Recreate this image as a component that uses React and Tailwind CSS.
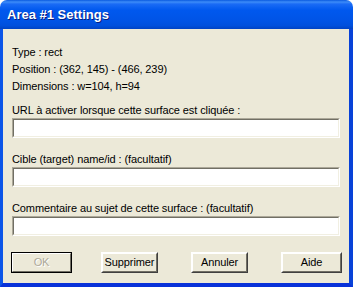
import React from "react";

// XP-style sunken edit box
function EditBox() {
  return (
    <div className="h-[20px] w-full border border-t-[#ACA899] border-l-[#ACA899] border-r-white border-b-white">
      <div className="h-full w-full border border-t-[#716F64] border-l-[#716F64] border-r-[#F1EFE2] border-b-[#F1EFE2] bg-white" />
    </div>
  );
}

function Button({ label, width, isDefault }) {
  if (isDefault) {
    // default + disabled (OK)
    return (
      <div className={`h-[21px] ${width} border border-black`}>
        <div className="h-full w-full border border-t-white border-l-white border-r-[#716F64] border-b-[#716F64]">
          <div className="flex h-full w-full items-center justify-center bg-[#ECE9D8]">
            <span className="text-[#ACA899] [text-shadow:1px_1px_0_#fff]">{label}</span>
          </div>
        </div>
      </div>
    );
  }
  return (
    <div className={`h-[21px] ${width} border border-t-white border-l-white border-r-[#404040] border-b-[#404040]`}>
      <div className="flex h-full w-full items-center justify-center border border-t-white border-l-white border-r-[#716F64] border-b-[#716F64] bg-[#ECE9D8]">
        {label}
      </div>
    </div>
  );
}

function Field({ label }) {
  return (
    <div className="flex flex-col">
      <div className="h-[16px] leading-[16px]">{label}</div>
      <EditBox />
    </div>
  );
}

export default function App() {
  return (
    <div className="flex h-[287px] w-[353px] flex-col bg-white font-['Liberation_Sans',Arial,sans-serif] text-[11px] tracking-[-0.1px] text-black">
      {/* TITLE BAR */}
      <div className="flex h-[29px] items-center rounded-t-[7px] bg-[linear-gradient(to_bottom,#0A5AE0_0%,#3D8CF8_7%,#1A6BF5_14%,#0058EE_35%,#0054E6_70%,#0050DD_88%,#0043C4_100%)] pl-[7px]">
        <span className="text-[13px] font-bold tracking-normal text-white [text-shadow:1px_1px_0_#0A1E80]">
          Area #1 Settings
        </span>
      </div>

      {/* CLIENT */}
      <div className="flex flex-1 flex-col border-b-4 border-l-[3px] border-r-4 border-b-[#0831D9] border-l-[#0B55E8] border-r-[#0842D8] bg-[#ECE9D8] px-[9px] pt-[15px]">
        <div className="leading-[17px]">
          <div>Type : rect</div>
          <div>Position : (362, 145) - (466, 239)</div>
          <div>Dimensions : w=104, h=94</div>
        </div>

        <div className="mt-[7px] flex flex-col gap-[13px]">
          <Field label="URL à activer lorsque cette surface est cliquée :" />
          <Field label="Cible (target) name/id : (facultatif)" />
          <Field label="Commentaire au sujet de cette surface : (facultatif)" />
        </div>

        <div className="mt-[16px] flex items-center">
          <div className="-ml-px">
            <Button label="OK" width="w-[61px]" isDefault />
          </div>
          <div className="ml-[29px]">
            <Button label="Supprimer" width="w-[57px]" />
          </div>
          <div className="ml-[33px]">
            <Button label="Annuler" width="w-[57px]" />
          </div>
          <div className="ml-[33px]">
            <Button label="Aide" width="w-[61px]" />
          </div>
        </div>
      </div>
    </div>
  );
}
